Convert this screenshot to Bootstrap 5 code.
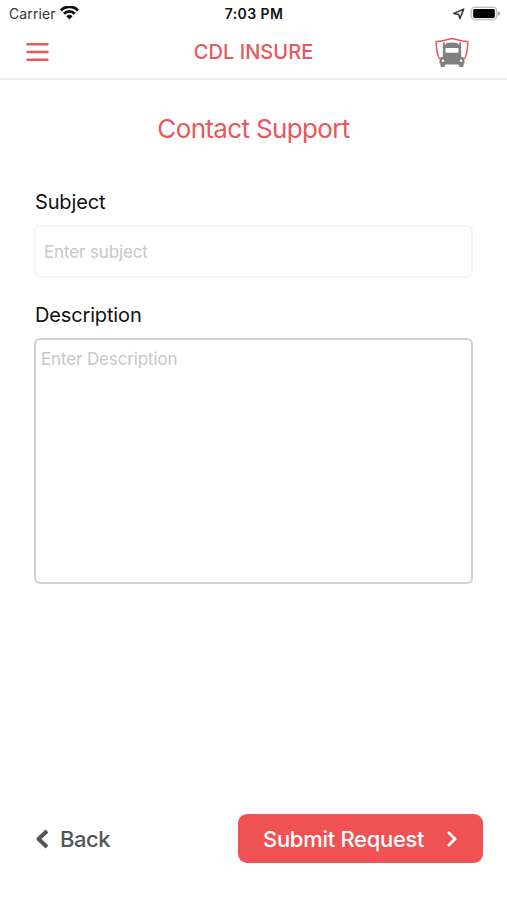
<!DOCTYPE html>
<html lang="en">
<head>
<meta charset="utf-8">
<meta name="viewport" content="width=device-width, initial-scale=1">
<title>Contact Support</title>
<link href="https://cdn.jsdelivr.net/npm/bootstrap@5.3.0/dist/css/bootstrap.min.css" rel="stylesheet">
<style>
  body { font-family: Inter, "Liberation Sans", sans-serif; color: #111; background: #fff; overflow: hidden; }
  .brand-red { color: #e8575a; }
  .status-row { height: 27px; font-size: 14px; line-height: 27px; padding: 0 6px 0 9px; }
  .status-row > div { flex: 1 1 0; }
  .status-row .carrier { color: #333; letter-spacing: .12px; }
  .status-row .clock { font-weight: 600; letter-spacing: .4px; padding-right: 2px; }
  .app-bar { height: 53px; border-bottom: 2px solid #ededed; padding: 0 38px 2px 26px; }
  .app-name { font-size: 20px; font-weight: 550; letter-spacing: .05px; padding: 1px 0 0 12px; }
  .menu-btn, .logo { width: 34px; }
  .page-title { font-size: 26px; font-weight: 400; line-height: 32px; letter-spacing: -.65px; margin: 33px 0 0; }
  .support-form { padding: 45px 34px 0; }
  .support-form .form-label { display: block; font-size: 20px; line-height: 24px; letter-spacing: -.15px; margin: 0 0 11px 1px; color: #111; }
  .support-form .form-control { font-size: 17px; letter-spacing: -.14px; border-radius: 6px; color: #333; resize: none; }
  .support-form .form-control::placeholder { color: #c7c7c9; opacity: 1; }
  .subject-box { height: 53px; border: 2px solid #f5f5f5; padding: 0 8px; margin-bottom: 25px; }
  .detail-box { height: 246px; border: 2px solid #d0d0d0; padding: 7px 5px; }
  .actions { padding: 0 24px 37px 35px; }
  .back-btn, .back-btn:hover { font-size: 22px; font-weight: 500; letter-spacing: -.5px; color: #555; line-height: 30px; }
  .submit-btn, .submit-btn:hover { width: 245px; height: 49px; background: #f05153; border-radius: 9px; color: #fff; font-size: 22px; font-weight: 550; letter-spacing: -.3px; border: 0; padding: 1px 25px 0; }
</style>
<script src="https://cdn.jsdelivr.net/npm/bootstrap@5.3.0/dist/js/bootstrap.bundle.min.js"></script>
</head>
<body class="d-flex flex-column vh-100">
<div class="status-row d-flex align-items-center">
  <div class="carrier d-flex align-items-center gap-1">Carrier
    <svg width="20" height="15" viewBox="0 0 20 15" fill="none" stroke="#111" stroke-width="2.800"><path d="M.800 4.400a12 12 0 0 1 17.200 0M4 7.700a7.600 7.600 0 0 1 10.800 0"/><path d="M9.400 13.400 6.300 10.200a4.600 4.600 0 0 1 6.200 0Z" fill="#111" stroke="none"/></svg>
  </div>
  <div class="clock text-center">7:03 PM</div>
  <div class="d-flex justify-content-end align-items-center">
    <svg width="48" height="16" viewBox="0 0 48 16"><path d="M.800 7.400 10.700 3.100 6.800 12.600 5.700 8.400Z" fill="none" stroke="#333" stroke-width="1.500" stroke-linejoin="round"/><rect x="18.300" y="1.200" width="25.400" height="12.300" rx="3.600" fill="#fff" stroke="#c4c4c4" stroke-width="1.600"/><rect x="20.200" y="2.900" width="21.600" height="9" rx="1.400" fill="#000"/><path d="M45 5.300c1.700.4 2.200 1.300 2.200 2.200s-.5 1.800-2.200 2.200Z" fill="#aaa"/></svg>
  </div>
</div>
<header class="app-bar d-flex justify-content-between align-items-center">
  <button class="menu-btn btn p-0 border-0 d-flex" aria-label="Menu"><svg width="24" height="20" viewBox="0 0 24 20" stroke="#e8575a" stroke-width="2.500" stroke-linecap="round"><path d="M1.500 2.300h20M1.500 10h20M1.500 17.700h20"/></svg></button>
  <div class="app-name brand-red">CDL INSURE</div>
  <div class="logo d-flex">
    <svg width="34" height="32" viewBox="0 0 34 32"><path d="M4.400 23C2.200 18 1 12 1.300 5.500 7.500 5.300 12 3.900 17 2.500c5 1.400 9.500 2.800 15.700 3 .3 6.500-.9 12.500-3.100 17.500" fill="none" stroke="#e8575a" stroke-width="1.500"/><path d="M7.800 6.500h2V9.500c.8-2.400 3-3 7.200-3s6.400.6 7.200 3V6.500h2v14.200c2.300.3 3.200 1.300 3.200 3.100v3.700h-.8v2.300c0 1.800-4.800 1.800-4.800 0v-1.300H10.200v1.300c0 1.800-4.800 1.800-4.800 0v-2.300h-.8v-3.700c0-1.800.9-2.800 3.200-3.100Z" fill="#808080"/><path d="M10.500 12h13v4.700h-13Z" fill="#fff"/><circle cx="7.900" cy="24.800" r="1.200" fill="#fff"/><circle cx="26.100" cy="24.800" r="1.200" fill="#fff"/></svg>
  </div>
</header>
<main>
  <h1 class="page-title brand-red text-center">Contact Support</h1>
  <form class="support-form">
    <label class="form-label" for="subject">Subject</label>
    <input id="subject" class="form-control subject-box" placeholder="Enter subject">
    <label class="form-label" for="description">Description</label>
    <textarea id="description" class="form-control detail-box" placeholder="Enter Description"></textarea>
  </form>
</main>
<footer class="actions mt-auto d-flex justify-content-between align-items-center">
  <button class="back-btn btn border-0 p-0 d-flex align-items-center"><svg class="me-2" width="17" height="22" viewBox="0 0 17 22" fill="none" stroke="#555" stroke-width="4" stroke-linejoin="round"><path d="M12 3 3.500 11l8.500 8"/></svg>Back</button>
  <button class="submit-btn btn d-flex justify-content-between align-items-center">Submit Request<svg width="12" height="18" viewBox="0 0 12 18" fill="none" stroke="#fff" stroke-width="2.800"><path d="m2 2 7 7-7 7"/></svg></button>
</footer>
</body>
</html>
